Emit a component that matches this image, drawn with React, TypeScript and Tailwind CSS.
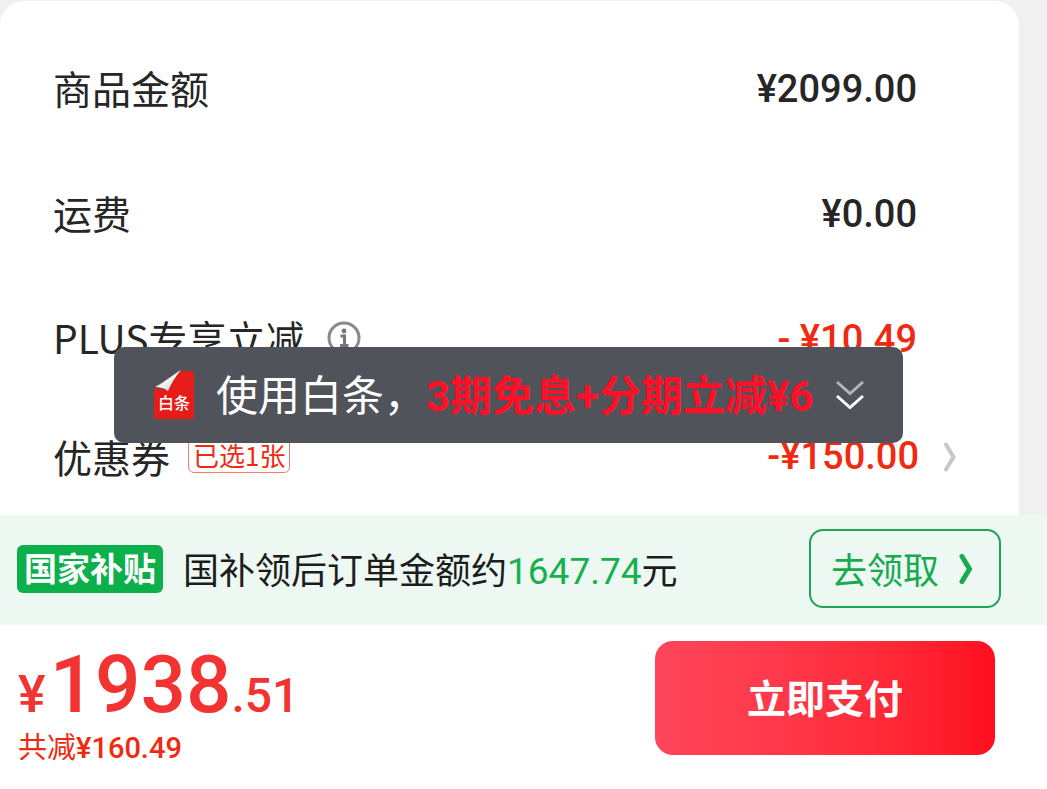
import type { ReactNode } from 'react';

interface PriceRowProps {
  label: ReactNode;
  value: string;
  discount?: boolean;
}

const PriceRow = ({ label, value, discount = false }: PriceRowProps) => (
  <div className="flex items-center justify-between py-10 pr-[102px] pl-[53px]">
    <dt className="flex items-center pb-1 text-[39px] leading-[41px]">{label}</dt>
    <dd
      className={`font-[Roboto,'Noto_Sans_CJK_SC',sans-serif] text-[38px] leading-[45px] font-medium whitespace-pre ${
        discount ? 'text-[#f02a12]' : ''
      }`}
    >
      {value}
    </dd>
  </div>
);

const InfoIcon = () => (
  <svg className="size-[34px]" viewBox="0 0 34 34" fill="none" aria-hidden="true">
    <circle cx="17" cy="17" r="15" stroke="#8a8a8a" strokeWidth="3" />
    <circle cx="17" cy="10" r="2.4" fill="#777" />
    <path d="M13.5 15H17.5V24M13 24.5H21.5" stroke="#777" strokeWidth="3" />
  </svg>
);

const ChevronIcon = ({ className }: { className: string }) => (
  <svg
    className={className}
    viewBox="0 0 14 30"
    fill="none"
    stroke="currentColor"
    strokeLinecap="round"
    aria-hidden="true"
  >
    <path d="M3 2.5L10.5 15L3 27.5" />
  </svg>
);

const BaitiaoIcon = () => (
  <svg className="h-[50px] w-[42px]" viewBox="0 0 42 50" aria-hidden="true">
    <defs>
      <linearGradient id="fold" x1="0" y1="0" x2="1" y2="1">
        <stop offset="0.25" stopColor="#a9b2ba" />
        <stop offset="0.5" stopColor="#f4f4f4" />
        <stop offset="0.8" stopColor="#d5d5d5" />
      </linearGradient>
    </defs>
    <path
      d="M1 18L14 20L27 1H39Q41 1 41 3V47Q41 49 39 49H3Q1 49 1 47Z"
      fill="#e51c18"
    />
    <path d="M2 17C10 13 18 6 28 0C22 7 18 14 15 21C11 18 7 17 2 17Z" fill="url(#fold)" />
    <text
      x="21"
      y="39"
      textAnchor="middle"
      fill="#fff"
      fontSize="16"
      fontWeight="500"
      fontFamily="'Noto Sans CJK SC', sans-serif"
    >
      白条
    </text>
  </svg>
);

const DoubleChevronIcon = () => (
  <svg
    className="h-[30px] w-7"
    viewBox="0 0 28 30"
    fill="none"
    strokeWidth="3"
    aria-hidden="true"
  >
    <path d="M1 2L14 13.5L27 2" stroke="#b4b5b8" />
    <path d="M1 16L14 27.5L27 16" stroke="#fff" />
  </svg>
);

const BaitiaoToast = () => (
  <button
    type="button"
    className="absolute bottom-18 left-[114px] flex h-24 items-center rounded-[10px] bg-[#50535a] px-[39px] text-[42px] leading-[60px] whitespace-nowrap text-white"
  >
    <BaitiaoIcon />
    <span className="ml-[21px]">
      使用白条，
      <span className="font-[Roboto,'Noto_Sans_CJK_SC',sans-serif] font-bold text-[#ff1028]">
        3期免息+分期立减¥6
      </span>
    </span>
    <span className="ml-[22px]">
      <DoubleChevronIcon />
    </span>
  </button>
);

const PriceDetails = () => (
  <section className="relative bg-[#f0f0f1] pt-px pr-7">
    <dl className="rounded-t-[24px] bg-white pt-[26px]">
      <PriceRow label="商品金额" value="¥2099.00" />
      <PriceRow label="运费" value="¥0.00" />
      <PriceRow
        label={
          <>
            PLUS专享立减
            <button type="button" aria-label="立减说明" className="ml-[22px]">
              <InfoIcon />
            </button>
          </>
        }
        value="- ¥10.49"
        discount
      />
      <div className="flex items-center justify-between pt-8 pr-[62px] pb-9 pl-[53px]">
        <dt className="flex items-center text-[39px] leading-[45px]">
          优惠券
          <span className="mb-1 ml-[18px] rounded-md border border-[#f27a6c] px-1 text-[26px] leading-[34px] text-[#f02a12]">
            已选1张
          </span>
        </dt>
        <dd className="flex items-center gap-6 font-[Roboto,'Noto_Sans_CJK_SC',sans-serif] text-[38px] leading-[45px] font-medium text-[#f02a12]">
          -¥150.00
          <ChevronIcon className="h-[30px] w-[14px] stroke-[4] text-[#c8c8c8]" />
        </dd>
      </div>
    </dl>
    <BaitiaoToast />
  </section>
);

const SubsidyBar = () => (
  <section className="flex items-center bg-[#edf8f3] pt-[14px] pr-[46px] pb-[17px] pl-[17px] text-[36px] text-[#1c1c1c]">
    <span className="rounded-md bg-[#0bb04a] px-[7px] pb-1 text-[33px] leading-[44px] font-bold text-white">
      国家补贴
    </span>
    <p className="ml-5 pt-1 whitespace-nowrap">
      国补领后订单金额约
      <span className="font-[Roboto,sans-serif] text-[37px] text-[#16b04f]">1647.74</span>元
    </p>
    <button
      type="button"
      className="ml-auto flex items-center gap-5 rounded-[14px] border-2 border-[#1fa556] py-[10px] pr-[26px] pl-5 leading-[55px] whitespace-nowrap text-[#16ab4e]"
    >
      去领取
      <ChevronIcon className="h-[30px] w-[14px] stroke-[5]" />
    </button>
  </section>
);

const PayBar = () => (
  <footer className="flex flex-1 items-start justify-between bg-white pt-4 pr-[52px] pb-[34px] pl-[18px]">
    <div>
      <p className="flex items-baseline font-[Roboto,sans-serif] leading-[88px] font-medium text-[#f33232]">
        <span className="mr-1 text-[52px] leading-none">¥</span>
        <span className="text-[80px]">1938</span>
        <span className="text-[48px] leading-none">.51</span>
      </p>
      <p className="text-[29px] leading-[32px] text-[#f02a12]">
        共减
        <span className="font-[Roboto,sans-serif] font-medium">¥160.49</span>
      </p>
    </div>
    <button
      type="button"
      className="rounded-[18px] bg-linear-to-r from-[#ff465b] to-[#ff0d20] px-[92px] pb-1 text-[39px] leading-[110px] font-bold text-white"
    >
      立即支付
    </button>
  </footer>
);

const App = () => (
  <main
    lang="zh-CN"
    className="flex min-h-screen flex-col font-['Noto_Sans_CJK_SC',sans-serif] text-[#262626]"
  >
    <PriceDetails />
    <SubsidyBar />
    <PayBar />
  </main>
);

export default App;
